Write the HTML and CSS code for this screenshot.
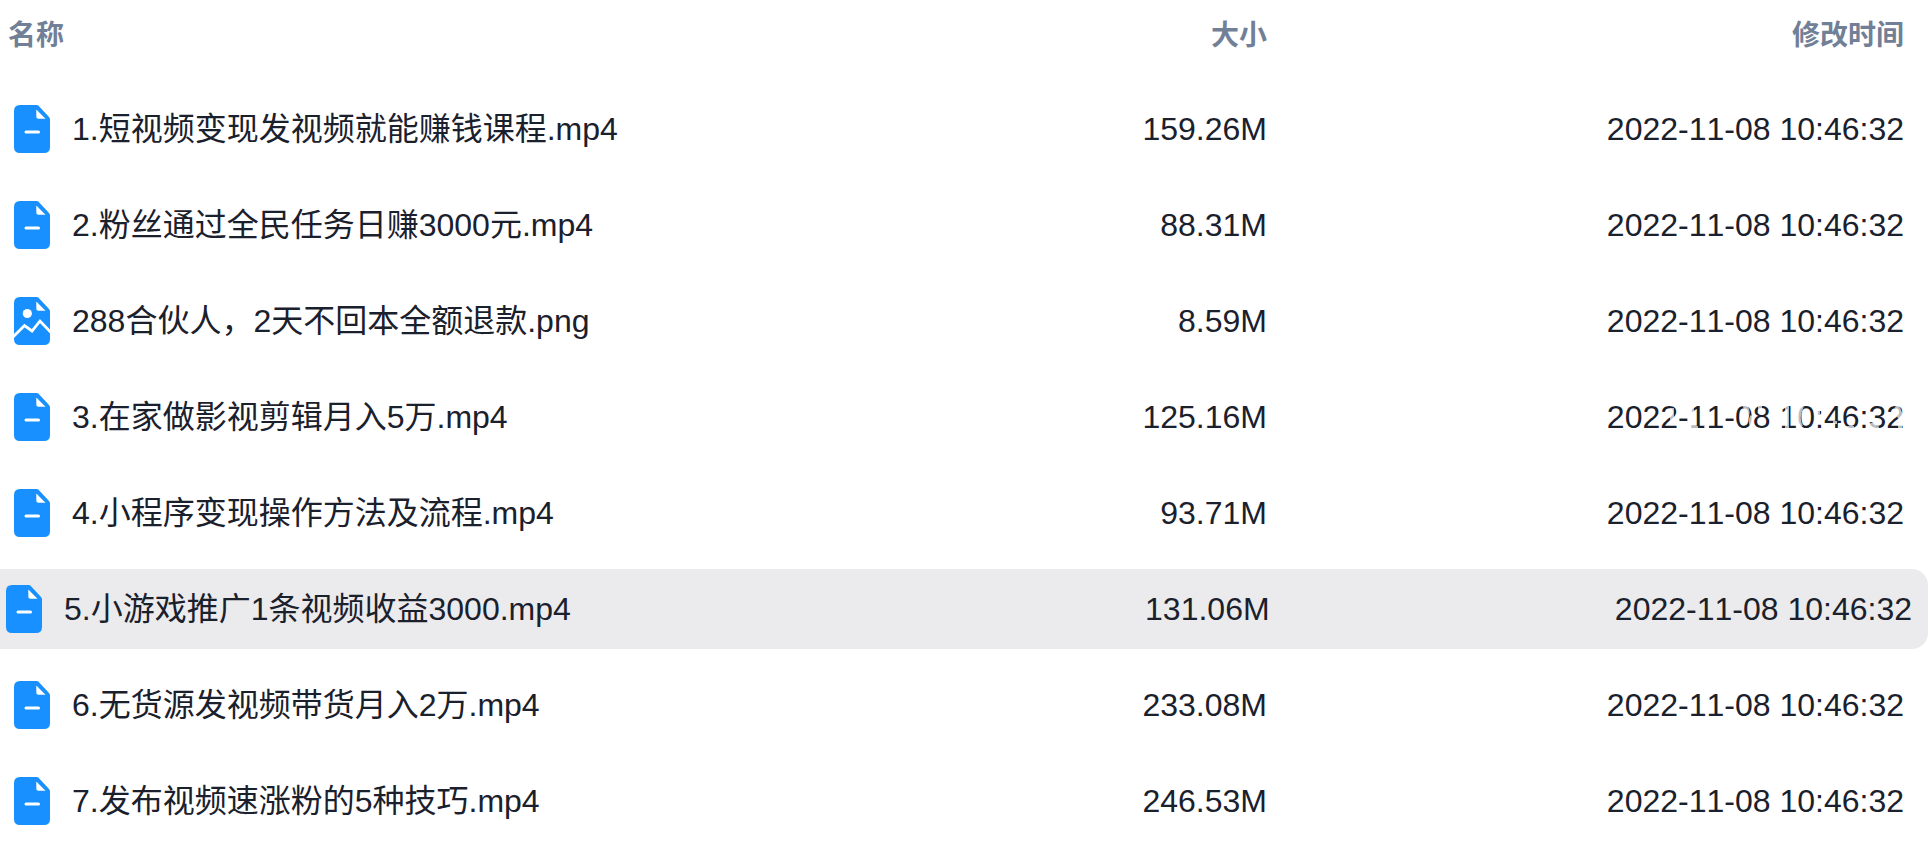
FILE: index.html
```html
<!DOCTYPE html>
<html lang="zh-CN">
<head>
    <meta charset="UTF-8">
    <meta name="viewport" content="width=device-width, initial-scale=1.0">
    <title>文件列表</title>
    <link rel="stylesheet" href="styles.css">
</head>
<body>
    <svg class="sprite" aria-hidden="true">
        <symbol id="icon-file" viewBox="0 0 36 48">
            <path fill="#1890ff" d="M6 0H22.500Q24 0 25 1.200L35 12Q36 13 36 14.500V42Q36 48 30 48H6Q0 48 0 42V6Q0 0 6 0Z"/>
            <path fill="#fff" d="M22.300 4.500L31.500 13.700H24.500Q22.300 13.700 22.300 11.500Z"/>
            <rect fill="#fff" x="10.500" y="25.500" width="15.500" height="3" rx="1.500"/>
        </symbol>
        <symbol id="icon-image" viewBox="0 0 36 48">
            <path fill="#1890ff" d="M6 0H22.500Q24 0 25 1.200L35 12Q36 13 36 14.500V42Q36 48 30 48H6Q0 48 0 42V6Q0 0 6 0Z"/>
            <path fill="#fff" d="M22.300 4.500L31.500 13.700H24.500Q22.300 13.700 22.300 11.500Z"/>
            <circle fill="#fff" cx="13.300" cy="16.500" r="4.600"/>
            <path fill="none" stroke="#fff" stroke-width="2.800" d="M-1 40L10.500 28.500L18 34L26 24L37 35.500"/>
        </symbol>
    </svg>
    <table class="file-list">
        <thead>
            <tr class="row head">
                <th scope="col">名称</th>
                <th scope="col" class="size">大小</th>
                <th scope="col" class="time">修改时间</th>
            </tr>
        </thead>
        <tbody>
            <tr class="row">
                <td class="name"><svg class="icon"><use href="#icon-file"/></svg>1.短视频变现发视频就能赚钱课程.mp4</td>
                <td class="size">159.26M</td>
                <td class="time">2022-11-08 10:46:32</td>
            </tr>
            <tr class="row">
                <td class="name"><svg class="icon"><use href="#icon-file"/></svg>2.粉丝通过全民任务日赚3000元.mp4</td>
                <td class="size">88.31M</td>
                <td class="time">2022-11-08 10:46:32</td>
            </tr>
            <tr class="row">
                <td class="name"><svg class="icon"><use href="#icon-image"/></svg>288合伙人，2天不回本全额退款.png</td>
                <td class="size">8.59M</td>
                <td class="time">2022-11-08 10:46:32</td>
            </tr>
            <tr class="row">
                <td class="name"><svg class="icon"><use href="#icon-file"/></svg>3.在家做影视剪辑月入5万.mp4</td>
                <td class="size">125.16M</td>
                <td class="time">2022-11-08 10:46:32
                    <svg class="watermark" viewBox="0 0 240 28" aria-hidden="true">
                        <path d="M8 5V19M28 2V9M26 25H34M40 25H45M47 12V16M80 2Q86 8 82 15M88 13Q85 20 90 26M96 3V7M123 2V26M138 3Q132 14 137 24M152 9H156M171 18V21M180 25H190M207 20Q210 26 215 25M232 3Q239 10 234 15M236 22V26"/>
                    </svg>
                </td>
            </tr>
            <tr class="row">
                <td class="name"><svg class="icon"><use href="#icon-file"/></svg>4.小程序变现操作方法及流程.mp4</td>
                <td class="size">93.71M</td>
                <td class="time">2022-11-08 10:46:32</td>
            </tr>
            <tr class="row active">
                <td class="name"><svg class="icon"><use href="#icon-file"/></svg>5.小游戏推广1条视频收益3000.mp4</td>
                <td class="size">131.06M</td>
                <td class="time">2022-11-08 10:46:32</td>
            </tr>
            <tr class="row">
                <td class="name"><svg class="icon"><use href="#icon-file"/></svg>6.无货源发视频带货月入2万.mp4</td>
                <td class="size">233.08M</td>
                <td class="time">2022-11-08 10:46:32</td>
            </tr>
            <tr class="row">
                <td class="name"><svg class="icon"><use href="#icon-file"/></svg>7.发布视频速涨粉的5种技巧.mp4</td>
                <td class="size">246.53M</td>
                <td class="time">2022-11-08 10:46:32</td>
            </tr>
        </tbody>
    </table>
</body>
</html>
```

FILE: styles.css
```css
body {
    margin: 0;
    background: #fff;
    color: #1a202c;
    font-family: "Liberation Sans", "Noto Sans CJK SC", sans-serif;
    font-size: 32px;
    font-kerning: none;
    line-height: 48px;
    overflow-x: hidden;
}
.sprite {
    display: none;
}
.file-list {
    display: block;
    padding-right: 12px;
}
.file-list thead {
    display: block;
    padding: 12px 0 29px;
}
.file-list tbody {
    display: flex;
    flex-direction: column;
    gap: 16px;
}
.row {
    display: grid;
    grid-template-columns: 1fr 17% 33.6%;
    align-items: center;
    height: 80px;
    padding: 0 16px 0 8px;
}
.row.head {
    height: 48px;
    color: #718096;
    font-size: 28px;
}
.row.active {
    margin: 0 -8px;
    border-radius: 0 16px 16px 0;
    background: #ebebed;
}
th,
td {
    padding: 0;
    text-align: left;
    white-space: nowrap;
}
.name {
    display: flex;
    align-items: center;
    gap: 22px;
    padding-left: 6px;
}
.icon {
    width: 36px;
    height: 48px;
    flex: none;
}
.size,
.time {
    text-align: right;
}
.time {
    position: relative;
}
/* faint mark lying over the date */
.watermark {
    position: absolute;
    right: 0;
    top: 10px;
    width: 240px;
    height: 28px;
    fill: none;
    stroke: #fff;
    stroke-width: 4;
    opacity: 0.7;
}
```
